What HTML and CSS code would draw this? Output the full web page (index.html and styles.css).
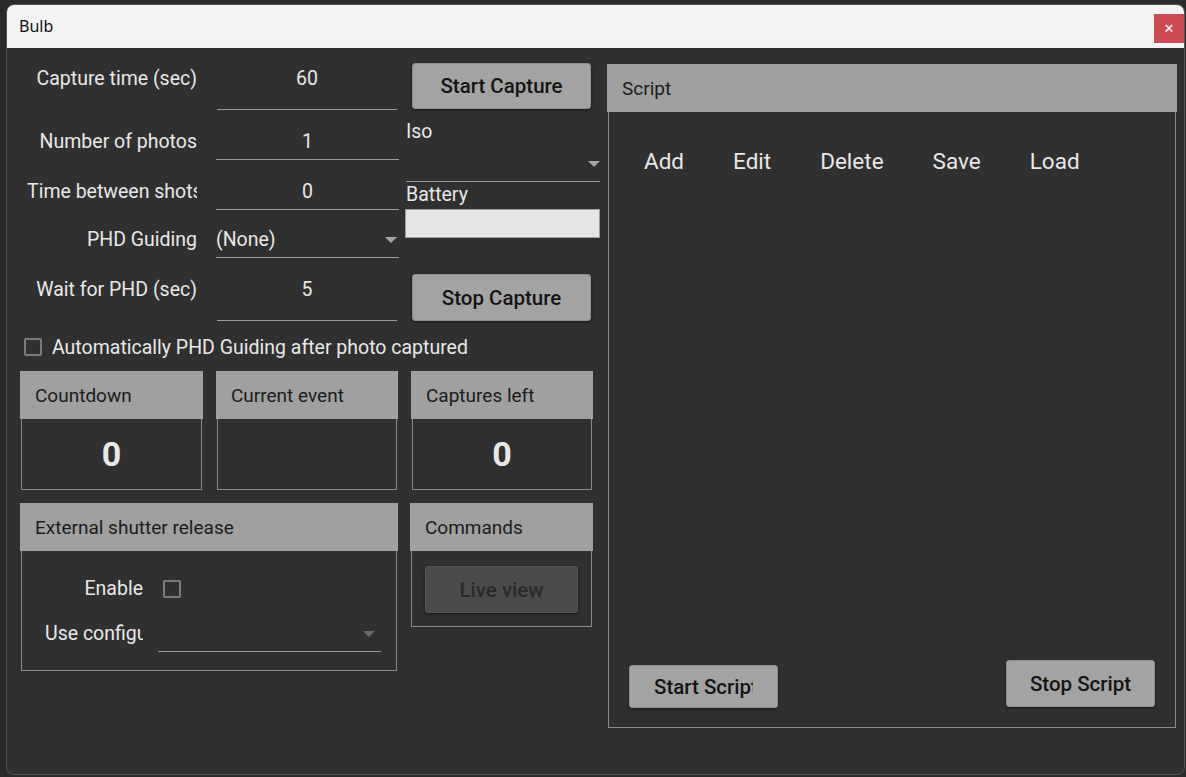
FILE: index.html
```html
<!doctype html>
<html lang="en">
<head>
  <meta charset="UTF-8">
  <title>Bulb</title>
  <link rel="stylesheet" href="styles.css">
</head>
<body>
  <div class="window">
    <div class="titlebar">
      <div class="title">Bulb</div>
      <div class="close">&#x2715;</div>
    </div>

    <div class="content">
      <div class="left">
        <div class="top">
          <div class="form">
            <div class="label">Capture time (sec)</div>
            <div class="field center tall">60</div>

            <div class="label">Number of photos</div>
            <div class="field center">1</div>

            <div class="label">Time between shots</div>
            <div class="field center">0</div>

            <div class="label">PHD Guiding</div>
            <div class="field combo">(None)<span class="arrow"></span></div>

            <div class="label">Wait for PHD (sec)</div>
            <div class="field center tall">5</div>
          </div>

          <div class="side">
            <div class="btn btn-capture">Start Capture</div>
            <div class="side-label">Iso</div>
            <div class="iso-combo"><span class="arrow"></span></div>
            <div class="side-label battery-label">Battery</div>
            <div class="battery"></div>
            <div class="btn btn-capture btn-stop">Stop Capture</div>
          </div>
        </div>

        <div class="check-row">
          <span class="checkbox"></span>
          <span>Automatically PHD Guiding after photo captured</span>
        </div>

        <div class="stats">
          <div class="panel">
            <div class="panel-head">Countdown</div>
            <div class="panel-body big">0</div>
          </div>
          <div class="panel">
            <div class="panel-head">Current event</div>
            <div class="panel-body big"></div>
          </div>
          <div class="panel">
            <div class="panel-head">Captures left</div>
            <div class="panel-body big">0</div>
          </div>
        </div>

        <div class="bottom">
          <div class="panel shutter">
            <div class="panel-head">External shutter release</div>
            <div class="panel-body shutter-body">
              <div class="label small">Enable</div>
              <div class="enable-cell"><span class="checkbox"></span></div>
              <div class="label small config-label">Use configuration</div>
              <div class="field combo config-combo"><span class="arrow dim"></span></div>
            </div>
          </div>
          <div class="panel commands">
            <div class="panel-head">Commands</div>
            <div class="panel-body commands-body">
              <div class="btn btn-disabled">Live view</div>
            </div>
          </div>
        </div>
      </div>

      <div class="panel script">
        <div class="panel-head">Script</div>
        <div class="panel-body script-body">
          <div class="menu">
            <span>Add</span>
            <span>Edit</span>
            <span>Delete</span>
            <span>Save</span>
            <span>Load</span>
          </div>
          <div class="script-buttons">
            <div class="btn btn-script"><span class="btn-text">Start Script</span></div>
            <div class="btn btn-script btn-stop-script">Stop Script</div>
          </div>
        </div>
      </div>
    </div>
  </div>
</body>
</html>
```

FILE: styles.css
```css
body {
    margin: 0;
    padding: 4px 0 0 6px;
    background: #2a2a2a;
    font-family: Roboto, "Noto Sans", sans-serif;
    color: #e8e8e8;
}

.window {
    width: 1179px;
    height: 771px;
    box-sizing: border-box;
    border: 1px solid #555;
    border-radius: 8px;
    overflow: hidden;
    background: #303030;
    display: flex;
    flex-direction: column;
}

.titlebar {
    height: 43px;
    flex-shrink: 0;
    background: #f3f3f3;
    display: flex;
    justify-content: space-between;
}

.title {
    font-family: "Noto Sans", sans-serif;
    font-size: 16px;
    color: #111;
    padding-left: 12px;
    line-height: 42px;
}

.close {
    width: 30px;
    height: 29px;
    margin-top: 9px;
    background: #cc4b52;
    color: #fff;
    font-family: "DejaVu Sans", sans-serif;
    font-weight: bold;
    font-size: 13px;
    display: flex;
    align-items: center;
    justify-content: center;
}

.content {
    flex: 1;
    display: flex;
    padding: 8px 0 0 13px;
}

.left {
    width: 580px;
}

/* form on the left */

.top {
    display: flex;
}

.form {
    width: 379px;
    box-sizing: border-box;
    padding-left: 7px;
    display: grid;
    grid-template-columns: 170px 183px;
    grid-template-rows: 54px 50px 50px 48px 63px;
    column-gap: 19px;
    font-size: 19.5px;
}

.label {
    white-space: nowrap;
    overflow: hidden;
    text-align: right;
    align-self: end;
    line-height: 24px;
    padding-bottom: 6px;
}

.form .label:nth-of-type(1),
.form .label:nth-of-type(9) {
    padding-bottom: 19px;
}

.field {
    border-bottom: 1px solid #9a9a9a;
    line-height: 24px;
    display: flex;
    align-items: flex-end;
    padding-bottom: 5px;
    position: relative;
}

.field.tall {
    padding-bottom: 18px;
    margin: 0 2px 0 1px;
}

.field.center {
    justify-content: center;
}

.arrow {
    position: absolute;
    right: 2px;
    bottom: 14px;
    width: 0;
    height: 0;
    border-left: 6px solid transparent;
    border-right: 6px solid transparent;
    border-top: 6px solid #a5a5a5;
}

.arrow.dim {
    border-top-color: #6a6a6a;
}

.side {
    width: 195px;
    margin-left: 6px;
    padding-top: 7px;
    display: flex;
    flex-direction: column;
    font-size: 19.5px;
}

.btn {
    background: #a3a3a3;
    border: 1px solid #8e8e8e;
    border-radius: 3px;
    box-shadow: 0 1px 3px rgba(0, 0, 0, 0.5);
    color: #151515;
    font-size: 20.5px;
    font-weight: 500;
    display: flex;
    align-items: center;
    justify-content: center;
    box-sizing: border-box;
    white-space: nowrap;
    overflow: hidden;
}

.btn-capture {
    width: 179px;
    height: 46px;
    margin-left: 7px;
}

.btn-stop {
    margin-top: 36px;
    height: 47px;
}

.side-label {
    line-height: 22px;
    margin-top: 12px;
    padding-left: 1px;
}

.battery-label {
    margin-top: 2px;
}

.iso-combo {
    height: 38px;
    border-bottom: 1px solid #9a9a9a;
    margin-left: 1px;
    position: relative;
}

.iso-combo .arrow {
    right: 0;
    bottom: 14px;
}

.battery {
    height: 29px;
    margin-top: 3px;
    box-sizing: border-box;
    background: #e6e6e6;
    border: 1px solid #9c9c9c;
    width: 195px;
}

/* checkbox line */

.check-row {
    margin-top: 17px;
    height: 18px;
    display: flex;
    align-items: center;
    gap: 10px;
    padding-left: 4px;
    font-size: 19.5px;
}

.checkbox {
    width: 18px;
    height: 18px;
    box-sizing: border-box;
    border: 2px solid #7c7c7c;
    border-radius: 2px;
    flex-shrink: 0;
}

/* panels */

.panel-head {
    height: 48px;
    background: #a0a0a0;
    color: #1c1c1c;
    font-size: 19px;
    line-height: 50px;
    padding-left: 15px;
}

.panel-body {
    box-sizing: border-box;
    border: 1px solid #8a8a8a;
    border-top: none;
    margin: 0 1px;
}

.stats {
    margin-top: 15px;
    display: grid;
    grid-template-columns: 183px 182px 182px;
    column-gap: 13px;
}

.big {
    height: 71px;
    font-size: 34px;
    font-weight: bold;
    display: flex;
    align-items: center;
    justify-content: center;
}

.bottom {
    margin-top: 13px;
    display: flex;
    align-items: flex-start;
    gap: 12px;
}

.shutter {
    width: 378px;
}

.shutter-body {
    height: 120px;
    padding: 23px 16px 0 23px;
    display: grid;
    grid-template-columns: 98px 223px;
    grid-template-rows: 30px 48px;
    column-gap: 15px;
    font-size: 19.5px;
}

.label.small {
    align-self: center;
    padding-bottom: 0;
}

.label.config-label {
    align-self: start;
    padding-top: 18px;
}

.enable-cell {
    display: flex;
    align-items: center;
    padding-left: 5px;
}

.config-combo {
    padding-bottom: 0;
}

.config-combo .arrow {
    right: 6px;
    bottom: 14px;
}

.commands {
    width: 183px;
}

.commands-body {
    height: 76px;
    padding: 15px 13px 0 13px;
}

.btn-disabled {
    height: 47px;
    background: #4b4b4b;
    border-color: #555;
    color: #2a2a2a;
}

/* script panel */

.script {
    width: 570px;
    height: 664px;
    margin: 8px 0 0 7px;
    display: flex;
    flex-direction: column;
}

.script-body {
    flex: 1;
    display: flex;
    flex-direction: column;
}

.menu {
    display: flex;
    gap: 49px;
    padding: 37px 0 0 35px;
    font-size: 22.5px;
    line-height: 24px;
}

.script-buttons {
    margin-top: auto;
    display: flex;
    justify-content: space-between;
    align-items: flex-end;
    padding: 0 20px 19px 20px;
}

.btn-script {
    width: 149px;
    height: 43px;
    padding: 0 24px;
    justify-content: flex-start;
}

.btn-text {
    flex: 1;
    min-width: 0;
    overflow: hidden;
}

.btn-stop-script {
    height: 47px;
    margin-bottom: 1px;
    padding: 0;
    justify-content: center;
}
```
